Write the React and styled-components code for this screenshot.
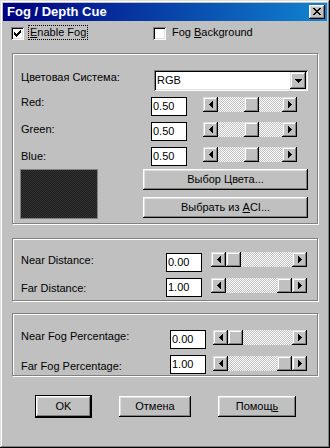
import React from "react";
import styled, { createGlobalStyle, css } from "styled-components";

const Global = createGlobalStyle`
  html, body { margin: 0; padding: 0; background: #c0c0c0; }
  body { font-family: "Liberation Sans", Arial, sans-serif; font-size: 11px; color: #000; }
  * { box-sizing: border-box; }
`;

const bevelRaised = css`
  background: #c0c0c0;
  box-shadow: inset -1px -1px #000, inset 1px 1px #dfdfdf, inset -2px -2px #808080, inset 2px 2px #fff;
`;

const bevelButton = css`
  background: #c0c0c0;
  box-shadow: inset -1px -1px #000, inset 1px 1px #fff, inset -2px -2px #808080, inset 2px 2px #dfdfdf;
`;

const bevelSunken = css`
  box-shadow: inset 1px 1px #808080, inset -1px -1px #fff, inset 2px 2px #000, inset -2px -2px #dfdfdf;
`;

const Window = styled.div`
  width: 330px;
  height: 448px;
  padding: 3px;
  display: flex;
  flex-direction: column;
  background: #c0c0c0;
  box-shadow: inset -1px -1px #000, inset 1px 1px #dfdfdf, inset -2px -2px #808080, inset 2px 2px #fff;
`;

const TitleBar = styled.div`
  height: 18px;
  display: flex;
  align-items: center;
  justify-content: space-between;
  padding: 0 2px 0 4px;
  background: linear-gradient(to right, #000080, #1084d0);
`;

const Title = styled.span`
  color: #fff;
  font-weight: bold;
  font-size: 13px;
  line-height: 18px;
  white-space: nowrap;
`;

const CloseButton = styled.div`
  width: 16px;
  height: 14px;
  ${bevelButton};
  display: flex;
  align-items: center;
  justify-content: center;
  padding-bottom: 1px;
`;

const Body = styled.div`
  display: flex;
  flex-direction: column;
  padding: 0 9px;
`;

const CheckRow = styled.div`
  display: flex;
  height: 15px;
  margin: 4px 0 0 -1px;
`;

const CheckItem = styled.div`
  display: flex;
  align-items: flex-start;
  width: ${(p) => p.$width}px;
`;

const CheckBox = styled.div`
  width: 13px;
  height: 13px;
  margin-top: 2px;
  background: #fff;
  ${bevelSunken};
  display: flex;
  align-items: center;
  justify-content: center;
`;

const CheckLabel = styled.span`
  margin-left: 4px;
  padding: 0 1px;
  line-height: 13px;
  white-space: nowrap;
  border: 1px dotted ${(p) => (p.$focus ? "#000" : "transparent")};
`;

const Group = styled.div`
  display: flex;
  flex-direction: column;
  margin-top: ${(p) => p.$mt}px;
  padding: ${(p) => p.$pt}px 9px ${(p) => p.$pb}px 8px;
  border: 1px solid #808080;
  box-shadow: inset 1px 1px #fff, 1px 1px #fff;
`;

const Row = styled.div`
  display: flex;
  align-items: flex-start;
  height: ${(p) => p.$h || 20}px;
  margin-top: ${(p) => p.$mt || 0}px;
`;

const Label = styled.span`
  width: ${(p) => p.$w}px;
  flex: none;
  margin-top: ${(p) => p.$off || 0}px;
  line-height: 13px;
  white-space: nowrap;
`;

const Edit = styled.div`
  width: 36px;
  height: 19px;
  flex: none;
  margin-top: ${(p) => p.$off || 0}px;
  border: 1px solid #000;
  background: #fff;
  padding-left: 1px;
  line-height: 17px;
`;

const Combo = styled.div`
  width: 154px;
  height: 21px;
  display: flex;
  padding: 2px;
  background: #fff;
  ${bevelSunken};
`;

const ComboText = styled.span`
  flex: 1;
  line-height: 17px;
  padding-left: 1px;
`;

const ComboButton = styled.div`
  width: 16px;
  ${bevelRaised};
  display: flex;
  align-items: center;
  justify-content: center;
`;

const Scroll = styled.div`
  display: flex;
  flex: none;
  width: ${(p) => p.$w}px;
  height: 15px;
  margin-left: ${(p) => p.$gap}px;
  margin-top: ${(p) => p.$off || 0}px;
`;

const ArrowButton = styled.div`
  width: 15px;
  flex: none;
  ${bevelRaised};
  display: flex;
  align-items: center;
  justify-content: center;
`;

const Track = styled.div`
  flex: 1;
  display: flex;
  background-color: #fff;
  background-image: repeating-conic-gradient(#c0c0c0 0 25%, #fff 0 50%);
  background-size: 2px 2px;
`;

const Spacer = styled.div`
  flex: ${(p) => p.$grow} 1 0;
`;

const Thumb = styled.div`
  width: 15px;
  flex: none;
  ${bevelRaised};
`;

const BottomRow = styled.div`
  display: flex;
  justify-content: space-between;
  margin-top: 3px;
`;

const Swatch = styled.div`
  width: 78px;
  height: 50px;
  margin-left: -1px;
  border: 1px solid #808080;
  background-color: #1e1e1e;
  background-image: repeating-conic-gradient(#333 0 25%, #1e1e1e 0 50%);
  background-size: 2px 2px;
`;

const ButtonColumn = styled.div`
  width: 165px;
  display: flex;
  flex-direction: column;
  gap: 7px;
`;

const PushButton = styled.div`
  width: ${(p) => (p.$w ? `${p.$w}px` : "auto")};
  height: ${(p) => (p.$default ? 23 : 21)}px;
  ${bevelButton};
  border: ${(p) => (p.$default ? "1px solid #000" : "none")};
  display: flex;
  align-items: center;
  justify-content: center;
  line-height: 13px;
  white-space: nowrap;
  padding-bottom: 1px;
`;

const ButtonText = styled.span`
  white-space: pre;
`;

const DialogButtons = styled.div`
  display: flex;
  align-items: center;
  gap: 27px;
  height: 23px;
  margin-top: 19px;
  padding-left: 23px;
`;

const PixelSvg = styled.svg`
  display: block;
  flex: none;
`;

const PixelIcon = ({ rows }) => (
  <PixelSvg width={rows[0].length} height={rows.length} shapeRendering="crispEdges">
    {rows.flatMap((r, y) =>
      [...r].map((c, x) =>
        c === "x" ? <rect key={`${x}-${y}`} x={x} y={y} width="1" height="1" fill="#000" /> : null
      )
    )}
  </PixelSvg>
);

const CLOSE = ["xx....xx", ".xx..xx.", "..xxxx..", "...xx...", "..xxxx..", ".xx..xx.", "xx....xx"];
const CHECK = ["......x", ".....xx", "x...xxx", "xx.xxx.", "xxxxx..", ".xxx...", "..x...."];
const DOWN = ["xxxxxxx", ".xxxxx.", "..xxx..", "...x..."];
const LEFT = ["...x", "..xx", ".xxx", "xxxx", ".xxx", "..xx", "...x"];
const RIGHT = ["x...", "xx..", "xxx.", "xxxx", "xxx.", "xx..", "x..."];

const ScrollBar = ({ w, gap, off, pos }) => (
  <Scroll $w={w} $gap={gap} $off={off}>
    <ArrowButton>
      <PixelIcon rows={LEFT} />
    </ArrowButton>
    <Track>
      <Spacer $grow={pos} />
      <Thumb />
      <Spacer $grow={1 - pos} />
    </Track>
    <ArrowButton>
      <PixelIcon rows={RIGHT} />
    </ArrowButton>
  </Scroll>
);

export default function App() {
  const rgbRows = [
    { name: "Red:", mt: 5, off: 0 },
    { name: "Green:", mt: 5, off: 2 },
    { name: "Blue:", mt: 5, off: 4 },
  ];
  return (
    <>
      <Global />
      <Window>
        <TitleBar>
          <Title>Fog / Depth Cue</Title>
          <CloseButton>
            <PixelIcon rows={CLOSE} />
          </CloseButton>
        </TitleBar>
        <Body>
          <CheckRow>
            <CheckItem $width={142}>
              <CheckBox>
                <PixelIcon rows={CHECK} />
              </CheckBox>
              <CheckLabel $focus>
                <u>E</u>nable Fog
              </CheckLabel>
            </CheckItem>
            <CheckItem>
              <CheckBox />
              <CheckLabel>
                Fog <u>B</u>ackground
              </CheckLabel>
            </CheckItem>
          </CheckRow>

          <Group $mt={13} $pt={16} $pb={4}>
            <Row $h={21}>
              <Label $w={133} $off={1}>Цветовая Система:</Label>
              <Combo>
                <ComboText>RGB</ComboText>
                <ComboButton>
                  <PixelIcon rows={DOWN} />
                </ComboButton>
              </Combo>
            </Row>
            {rgbRows.map((r) => (
              <Row key={r.name} $mt={r.mt}>
                <Label $w={130} $off={r.off}>{r.name}</Label>
                <Edit $off={1}>0.50</Edit>
                <ScrollBar w={94} gap={16} off={1} pos={0.53} />
              </Row>
            ))}
            <BottomRow>
              <Swatch />
              <ButtonColumn>
                <PushButton>
                  <ButtonText>Выбор Цвета...</ButtonText>
                </PushButton>
                <PushButton>
                  <ButtonText>
                    {"Выбрать из "}
                    <u>A</u>
                    {"CI..."}
                  </ButtonText>
                </PushButton>
              </ButtonColumn>
            </BottomRow>
          </Group>

          <Group $mt={14} $pt={13} $pb={3}>
            <Row>
              <Label $w={145} $off={2}>Near Distance:</Label>
              <Edit $off={1}>0.00</Edit>
              <ScrollBar w={96} gap={9} off={0} pos={0} />
            </Row>
            <Row $mt={5}>
              <Label $w={145} $off={5}>Far Distance:</Label>
              <Edit $off={1}>1.00</Edit>
              <ScrollBar w={96} gap={9} off={1} pos={1} />
            </Row>
          </Group>

          <Group $mt={12} $pt={15} $pb={1}>
            <Row>
              <Label $w={149} $off={1}>Near Fog Percentage:</Label>
              <Edit $off={1}>0.00</Edit>
              <ScrollBar w={94} gap={7} off={1} pos={0} />
            </Row>
            <Row $mt={5}>
              <Label $w={149} $off={6}>Far Fog Percentage:</Label>
              <Edit $off={1}>1.00</Edit>
              <ScrollBar w={94} gap={7} off={2} pos={1} />
            </Row>
          </Group>

          <DialogButtons>
            <PushButton $w={57} $default>
              <ButtonText>OK</ButtonText>
            </PushButton>
            <PushButton $w={72}>
              <ButtonText>Отмена</ButtonText>
            </PushButton>
            <PushButton $w={78}>
              <ButtonText>
                Помощ<u>ь</u>
              </ButtonText>
            </PushButton>
          </DialogButtons>
        </Body>
      </Window>
    </>
  );
}
